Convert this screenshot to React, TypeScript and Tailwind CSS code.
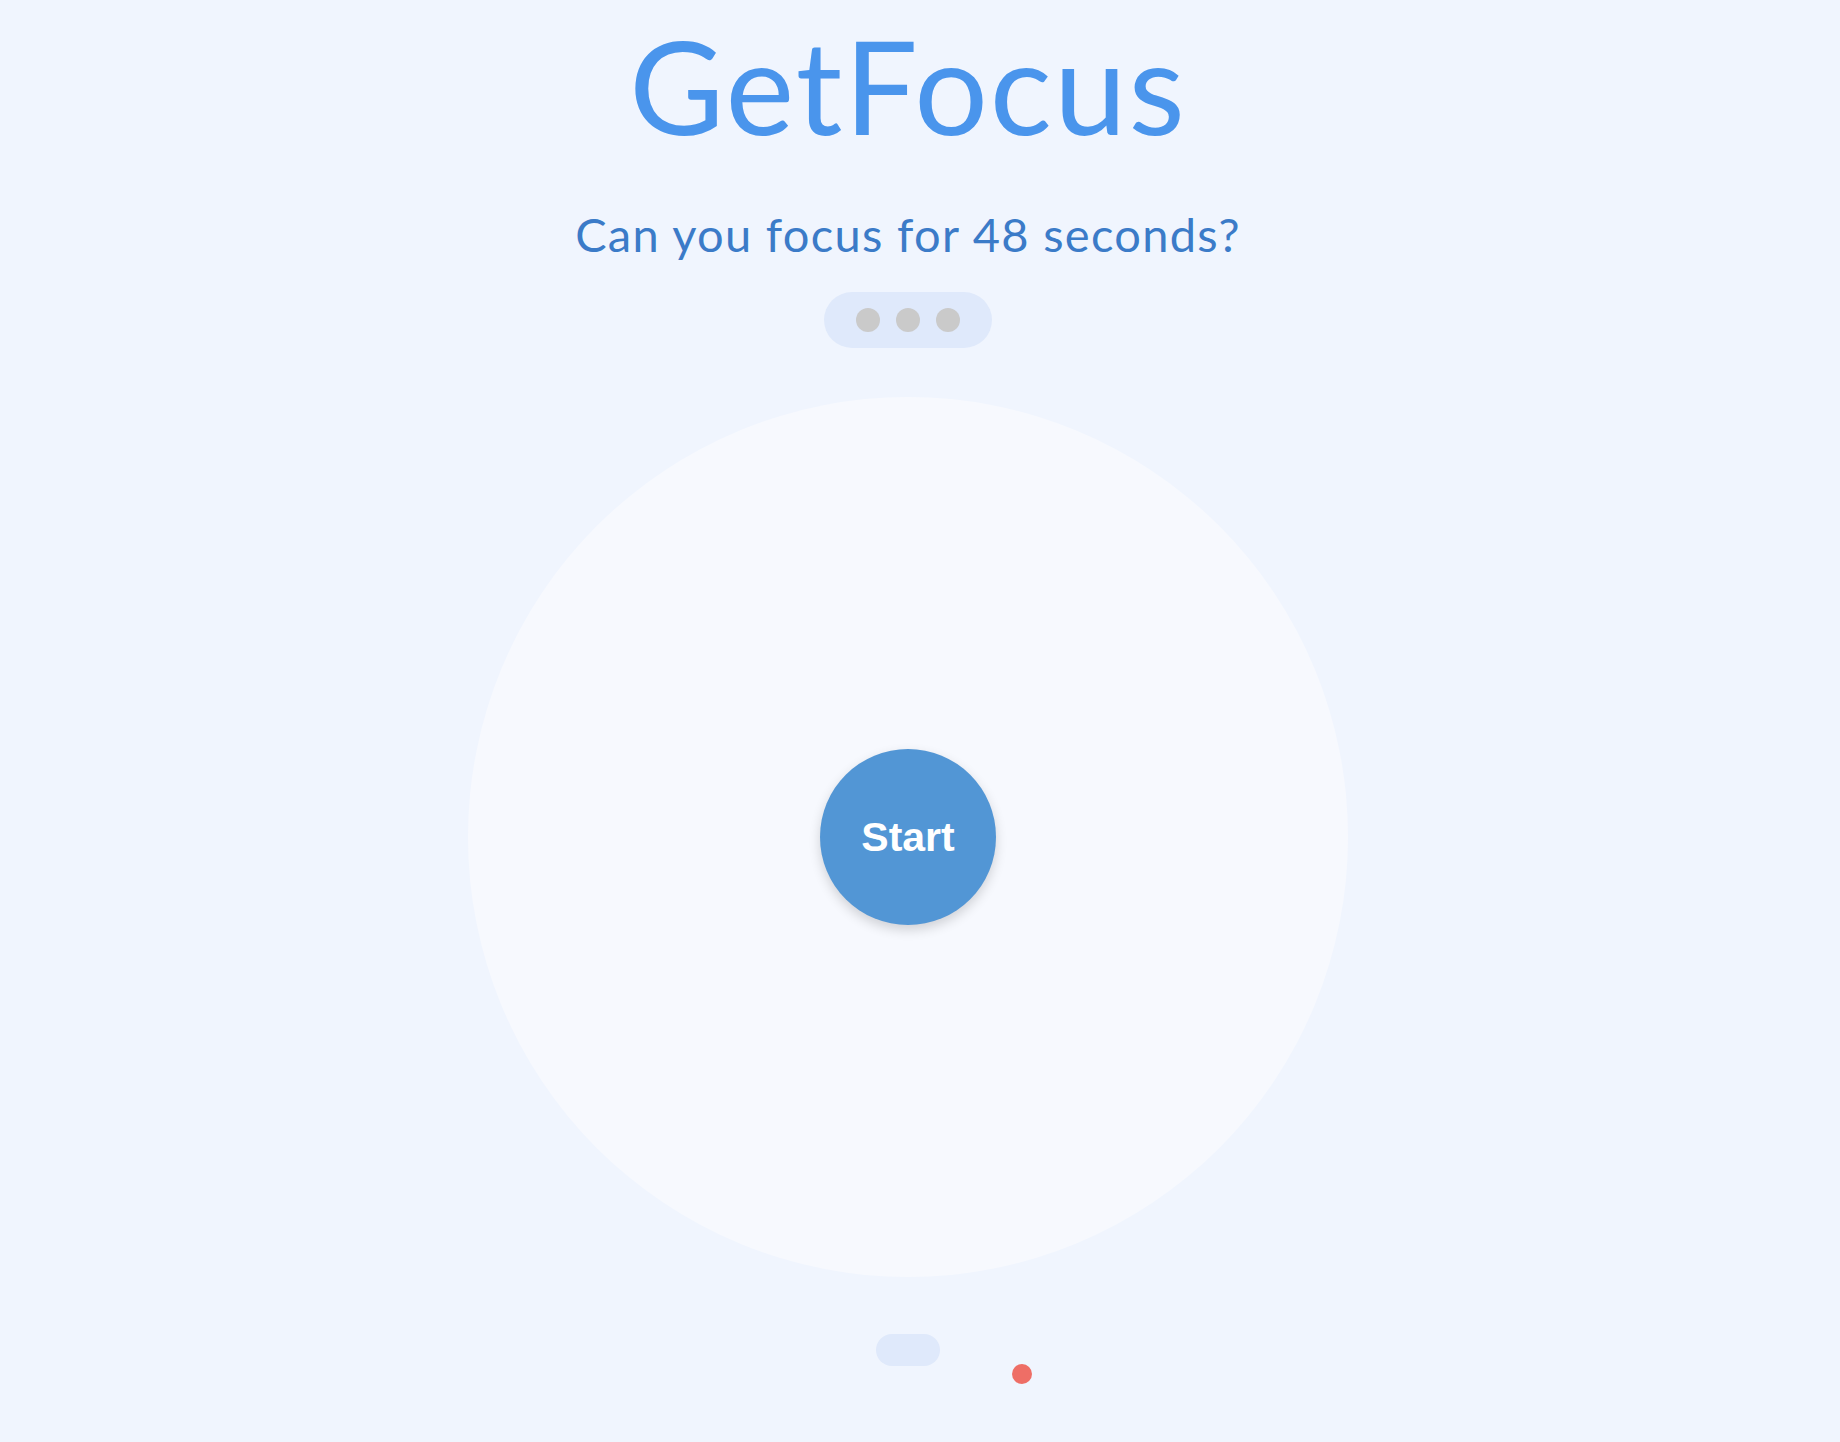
import React from "react";

/* ─── Progress dots in the pill under the question ─── */

function DotPill() {
  return (
    <div className="flex h-[56px] w-[168px] items-center justify-center gap-4 rounded-full bg-[#dfe9fb]">
      <span className="h-6 w-6 rounded-full bg-[#cacaca]" />
      <span className="h-6 w-6 rounded-full bg-[#cacaca]" />
      <span className="h-6 w-6 rounded-full bg-[#cacaca]" />
    </div>
  );
}

export default function App() {
  return (
    <div className="min-h-[1442px] w-full bg-[#f0f5fe] font-['Lato',sans-serif]">
      <div className="flex flex-col items-center pr-6 pt-5">
        <h1 className="text-[130px] leading-[130px] font-normal tracking-[2px] text-[#4a95ec]">
          GetFocus
        </h1>

        <p className="mt-[61px] text-[47px] leading-[47px] tracking-[1.3px] text-[#3b7bc8]">
          Can you focus for 48 seconds?
        </p>

        <div className="mt-[34px]">
          <DotPill />
        </div>

        {/* Focus area */}
        <div className="mt-[49px] flex h-[880px] w-[880px] items-center justify-center rounded-full bg-[#f7f9fe]">
          <button className="flex h-[176px] w-[176px] items-center justify-center rounded-full bg-[#5296d5] pt-[2px] font-['Liberation_Sans',Arial,sans-serif] text-[41px] font-bold text-white shadow-[0_5px_12px_rgba(0,0,0,0.16)]">
            Start
          </button>
        </div>

        <div className="relative mt-[57px]">
          <div className="h-8 w-16 rounded-full bg-[#dfe9fb]" />
          <span className="absolute left-[136px] top-[30px] h-5 w-5 rounded-full bg-[#ee6e66]" />
        </div>
      </div>
    </div>
  );
}
